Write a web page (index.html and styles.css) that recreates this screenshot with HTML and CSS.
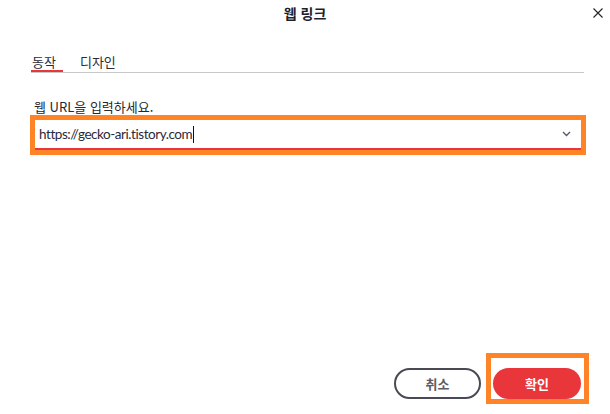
FILE: index.html
```html
<!DOCTYPE html>
<html lang="ko">
<head>
    <meta charset="UTF-8">
    <meta name="viewport" content="width=device-width, initial-scale=1.0">
    <title>웹 링크</title>
    <link rel="stylesheet" href="styles.css">
</head>
<body>

    <div class="dialog">
        <header class="dialog-header">
            <span></span>
            <h1>웹 링크</h1>
            <button class="close-btn" aria-label="닫기">
                <svg width="10" height="10" viewBox="0 0 10 10">
                    <path d="M0.5 0.5 L9.5 9.5 M9.5 0.5 L0.5 9.5" stroke="#222" stroke-width="1.1" fill="none"/>
                </svg>
            </button>
        </header>

        <section class="dialog-body">
            <ul class="tabs">
                <li class="tab active">동작</li>
                <li class="tab">디자인</li>
            </ul>

            <label class="field-label">웹 URL을 입력하세요.</label>
            <div class="highlight">
                <div class="url-field">
                    <span class="url-text">https://gecko-ari.tistory.com</span><span class="caret"></span>
                    <svg class="chevron" width="9" height="6" viewBox="0 0 9 6">
                        <path d="M1 1 L4.5 4.5 L8 1" stroke="#55556a" stroke-width="1.3" fill="none"/>
                    </svg>
                </div>
            </div>
        </section>

        <footer class="dialog-footer">
            <button class="btn btn-cancel">취소</button>
            <div class="highlight highlight-btn">
                <button class="btn btn-ok">확인</button>
            </div>
        </footer>
    </div>

</body>
</html>
```

FILE: styles.css
```css
/* Root Variables */
:root {
    --red: #e8363a;
    --orange: #ff8427;
    --text: #23232f;
    --line: #c8c8c8;
}

/* General Styles */
body {
    margin: 0;
    padding: 0;
    background: white;
    font-family: 'Noto Sans CJK KR', 'Noto Sans', sans-serif;
    color: var(--text);
}

.dialog {
    width: 610px;
    height: 414px;
    display: flex;
    flex-direction: column;
}

/* Header */
.dialog-header {
    display: grid;
    grid-template-columns: 1fr auto 1fr;
    align-items: center;
    height: 26px;
}

.dialog-header h1 {
    margin: 0;
    font-size: 14px;
    font-weight: 700;
    line-height: 26px;
    color: #1e1e2c;
}

.close-btn {
    justify-self: end;
    margin-right: 7px;
    border: none;
    background: none;
    padding: 0;
    width: 10px;
    height: 10px;
    display: flex;
}

/* Body */
.dialog-body {
    padding: 0 26px 0 31px;
}

.tabs {
    list-style: none;
    margin: 27px 0 0;
    padding: 0;
    display: flex;
    gap: 16px;
    border-bottom: 1px solid var(--line);
}

.tab {
    font-size: 13px;
    line-height: 17px;
    padding: 0 0 0 1px;
    border-bottom: 2px solid transparent;
    color: #2a2a38;
}

.tab.active {
    border-bottom-color: var(--red);
    padding-right: 7px;
}

.field-label {
    display: block;
    margin-top: 25px;
    font-size: 13px;
    line-height: 17px;
    padding-left: 3px;
    color: #262630;
}

.highlight {
    border: 5px solid var(--orange);
    margin: 0 -2px 0 -1px;
}

.url-field {
    height: 28px;
    border-bottom: 2px solid var(--red);
    display: flex;
    align-items: center;
    padding: 0 10px 0 4px;
}

.url-text {
    font-family: Lato, sans-serif;
    font-size: 13.5px;
    letter-spacing: -0.45px;
    color: #2a2a3a;
}

.caret {
    width: 1px;
    height: 17px;
    background: #111;
    margin-left: 1px;
}

.chevron {
    margin-left: auto;
}

/* Footer */
.dialog-footer {
    margin-top: auto;
    display: flex;
    justify-content: flex-end;
    align-items: flex-end;
    gap: 5px;
    padding: 0 21px 10px 0;
}

.highlight-btn {
    margin: 0;
    padding: 10px 3px 0 2px;
}

.btn {
    height: 31px;
    width: 88px;
    border-radius: 16px;
    font-family: 'Noto Sans CJK KR', sans-serif;
    font-size: 13px;
    font-weight: 700;
    cursor: pointer;
    display: block;
}

.btn-cancel {
    background: white;
    border: 2px solid #4a4a54;
    color: #5c5c68;
    width: 87px;
    margin-bottom: 5px;
}

.btn-ok {
    background: var(--red);
    border: none;
    color: white;
}
```
